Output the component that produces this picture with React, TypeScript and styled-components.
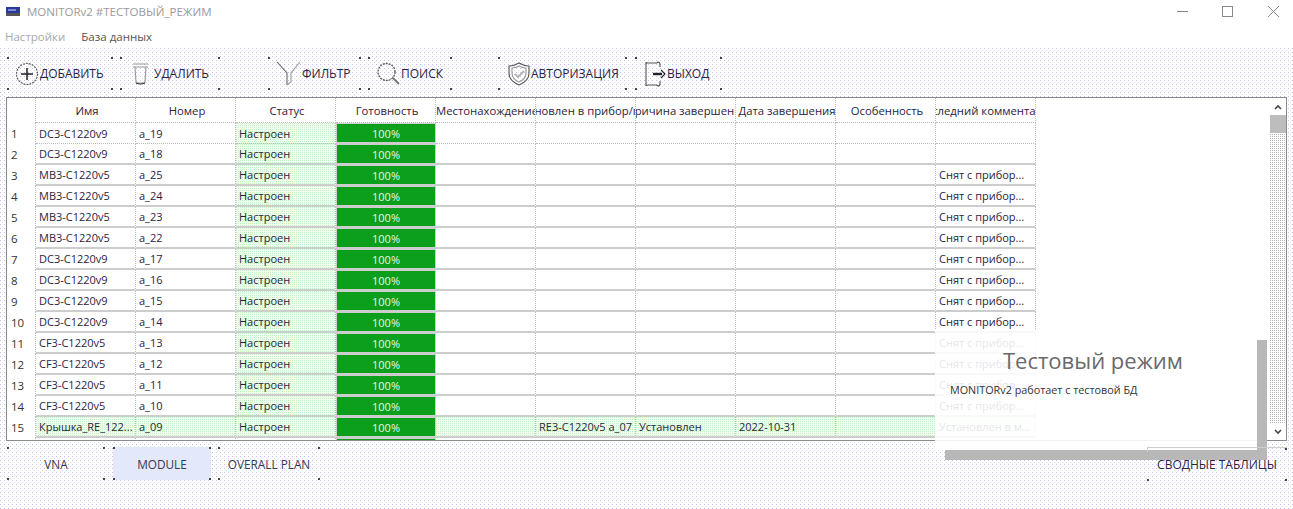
import React from 'react';
import styled, { createGlobalStyle, css } from 'styled-components';

const GlobalStyle = createGlobalStyle`
  html, body {
    margin: 0;
    padding: 0;
    background: #fff;
  }
  body {
    font-family: "Open Sans", "Liberation Sans", sans-serif;
    overflow: hidden;
  }
`;

const dots = css`
  background-color: #fff;
  background-image:
    radial-gradient(circle at 0.5px 0.5px, #c9bdf0 0.75px, transparent 0.75px),
    radial-gradient(circle at 2.5px 2.5px, #d4e2f4 0.75px, transparent 0.75px);
  background-size: 4px 4px;
`;

const corners = css`
  background-image:
    linear-gradient(#444, #444),
    linear-gradient(#444, #444),
    linear-gradient(#444, #444),
    linear-gradient(#444, #444);
  background-size: 2px 2px;
  background-repeat: no-repeat;
  background-position: 0 0, 100% 0, 0 100%, 100% 100%;
`;

const gridLine = '#bcbcbc';

const Window = styled.div`
  position: relative;
  width: 1293px;
  height: 509px;
  overflow: hidden;
  display: flex;
  flex-direction: column;
`;

const TitleBar = styled.div`
  height: 23px;
  display: flex;
  align-items: center;
  padding-left: 6px;
  font-size: 11.5px;
  color: #9a9a9a;
  gap: 7px;
`;

const WindowButtons = styled.div`
  margin-left: auto;
  margin-right: -3px;
  display: flex;
`;

const WindowButton = styled.div`
  width: 45.5px;
  height: 23px;
  display: flex;
  align-items: center;
  justify-content: center;
`;

const MenuBar = styled.div`
  height: 25px;
  box-sizing: border-box;
  padding: 2px 0 0 5px;
  display: flex;
  align-items: center;
  gap: 16px;
  font-size: 11.5px;
`;

const MenuItem = styled.span<{ $disabled?: boolean }>`
  color: ${({ $disabled }) => ($disabled ? '#a8a8a8' : '#555')};
`;

const Body = styled.div`
  ${dots}
  flex: 1;
  display: flex;
  flex-direction: column;
`;

const Toolbar = styled.div`
  height: 49px;
  box-sizing: border-box;
  display: flex;
  align-items: flex-start;
  padding: 9px 0 0 7px;
`;

const ToolButton = styled.div<{ $width: number; $gap: number; $inset: number }>`
  ${corners}
  width: ${({ $width }) => $width}px;
  margin-left: ${({ $gap }) => $gap}px;
  height: 33px;
  display: flex;
  align-items: center;
  gap: 1px;
  padding-left: ${({ $inset }) => $inset}px;
  box-sizing: border-box;
  font-size: 12px;
  color: #2a2440;
  white-space: nowrap;
  flex: none;
`;

const TableFrame = styled.div`
  margin-left: 6px;
  width: 1281px;
  height: 344px;
  box-sizing: border-box;
  border: 1px solid #8a8a8a;
  background: #fff;
  display: flex;
  overflow: hidden;
`;

const TableArea = styled.div`
  flex: 1;
  overflow: hidden;
  font-size: 11px;
  color: #2a2440;
`;

const HeaderRow = styled.div`
  display: grid;
  grid-template-columns: 29px repeat(10, 100px);
  height: 25px;
`;

const HeadCell = styled.div`
  box-sizing: border-box;
  display: flex;
  align-items: center;
  justify-content: center;
  padding-left: 3px;
  white-space: nowrap;
  overflow: hidden;
  border-right: 1px dotted ${gridLine};
  border-bottom: 1px dotted ${gridLine};
  font-size: 11.3px;
`;

const HeadLabel = styled.span`
  flex: none;
`;

const Corner = styled.div`
  border-right: 1px dotted ${gridLine};
`;

const Row = styled.div`
  display: grid;
  grid-template-columns: 29px repeat(10, 100px);
  height: 21px;
`;

const RowHead = styled.div`
  display: flex;
  align-items: center;
  padding-left: 4px;
  font-size: 11.5px;
  color: #333;
  border-right: 1px dotted ${gridLine};
`;

const Cell = styled.div<{ $green?: boolean; $thick?: boolean }>`
  box-sizing: border-box;
  display: flex;
  align-items: center;
  padding-left: 3px;
  white-space: nowrap;
  overflow: hidden;
  border-right: 1px dotted ${gridLine};
  border-bottom: ${({ $thick }) => ($thick ? '2px solid #cdcdcd' : `1px dotted ${gridLine}`)};
  ${({ $green }) =>
    $green &&
    css`
      background-color: #f0fdf0;
      background-image: radial-gradient(circle at 0.5px 0.5px, #c6f2c6 0.75px, transparent 0.75px);
      background-size: 2px 2px;
    `}
`;

const ReadyCell = styled.div`
  box-sizing: border-box;
  display: flex;
  align-items: center;
  justify-content: center;
  background: #0b9f1c;
  background-clip: padding-box;
  color: #e8f6e8;
  border-style: solid;
  border-color: #cdcdcd;
  border-width: 1px 1px 2px 1px;
`;

const Scrollbar = styled.div`
  width: 16px;
  flex: none;
  display: flex;
  flex-direction: column;
  background-color: #fff;
  background-image: radial-gradient(circle at 0.5px 0.5px, #b4b4b4 0.75px, transparent 0.75px);
  background-size: 2px 2px;
`;

const ScrollArrow = styled.div`
  height: 17px;
  flex: none;
  background: #fff;
  display: flex;
  align-items: center;
  justify-content: center;
`;

const ScrollThumb = styled.div`
  height: 18px;
  background: #bdbdbd;
  flex: none;
`;

const ScrollFill = styled.div`
  flex: 1;
`;

const Footer = styled.div`
  flex: 1;
  display: flex;
  align-items: flex-start;
  padding-top: 6px;
  padding-left: 7px;
`;

const TabButton = styled.div<{ $width: number; $gap: number; $active?: boolean }>`
  ${corners}
  width: ${({ $width }) => $width}px;
  margin-left: ${({ $gap }) => $gap}px;
  height: 33px;
  display: flex;
  align-items: center;
  justify-content: center;
  font-size: 11.8px;
  color: #3a3650;
  background-color: ${({ $active }) => ($active ? '#e3e8fb' : 'transparent')};
`;

const SummaryButton = styled.div`
  ${corners}
  background-position: 0 100%, 100% 0, 0 100%, 100% 100%;
  position: relative;
  z-index: 2;
  margin-left: auto;
  margin-right: 6px;
  width: 140px;
  height: 34px;
  box-sizing: border-box;
  border-top: 1px solid #cfcfcf;
  display: flex;
  align-items: center;
  justify-content: center;
  font-size: 12px;
  color: #2a2440;
  white-space: nowrap;

  &::before {
    content: '';
    position: absolute;
    left: 0;
    top: 0;
    width: 1px;
    height: 4px;
    background: #cfcfcf;
  }
`;

const Toast = styled.div`
  position: absolute;
  left: 935px;
  top: 330px;
  width: 322px;
  height: 120px;
  background: rgba(255, 255, 255, 0.88);
  box-shadow: 10px 10px 0 #b8b8b8;
`;

const ToastTitle = styled.div`
  margin: 16px 0 0 68px;
  font-size: 22px;
  line-height: 28px;
  color: #6a6a6a;
  white-space: nowrap;
`;

const ToastText = styled.div`
  margin: 8px 0 0 15px;
  font-size: 10.8px;
  line-height: 16px;
  color: #333;
  white-space: nowrap;
`;

const Icon = styled.svg`
  flex: none;
  fill: none;
  stroke: #555;
  stroke-width: 1.1;
`;

const PlusIcon = () => (
  <Icon width="24" height="24" viewBox="0 0 24 24">
    <circle cx="12" cy="12" r="10.5" strokeDasharray="2 1" />
    <path d="M12 6v12M6 12h12" stroke="#222" strokeWidth="1.5" />
  </Icon>
);

const TrashIcon = () => (
  <Icon width="20" height="24" viewBox="0 0 20 24">
    <path d="M0 2h15M0 5h15" stroke="#999" />
    <path d="M2 5l1 15q0 1 1 1h7q1 0 1-1l1-15" stroke="#999" />
    <path d="M3 21q4 2 9 0" stroke="#333" />
  </Icon>
);

const FunnelIcon = () => (
  <Icon width="25" height="26" viewBox="0 0 25 26">
    <path d="M1 1l10 11v12" stroke="#666" />
    <path d="M24 1l-9 11v9l-4 3" stroke="#999" />
  </Icon>
);

const SearchIcon = () => (
  <Icon width="23" height="24" viewBox="0 0 23 24">
    <circle cx="9.5" cy="10" r="8.5" strokeWidth="1.3" strokeDasharray="2 1" />
    <path d="M16 16l6 6" stroke="#777" strokeWidth="2" />
  </Icon>
);

const ShieldIcon = () => (
  <Icon width="22" height="24" viewBox="0 0 22 24">
    <path d="M11 1q5 3 10 3v7q0 8-10 12Q1 19 1 11V4q5 0 10-3z" />
    <path d="M11 4q3 2 7 2v5q0 6-7 9-7-3-7-9V6q4 0 7-2z" stroke="#999" />
    <path d="M7 12l3 3 6-6" stroke="#aaa" strokeWidth="1.6" />
  </Icon>
);

const ExitIcon = () => (
  <Icon width="21" height="26" viewBox="0 0 21 26">
    <path d="M15 6V3q0-2-2-2l-1 1H3q-2 0-2-1v24q0-1 2-1h9l1 1q2 0 2-2v-3" />
    <path d="M8 13h9" stroke="#222" strokeWidth="2.4" />
    <path d="M16 9l4 4-4 4" stroke="#222" />
  </Icon>
);

const AppIcon = () => (
  <svg width="14" height="9" viewBox="0 0 14 9">
    <rect x="0" y="0" width="14" height="6" fill="#2b3a9a" />
    <rect x="2" y="2" width="8" height="2" fill="#7d8ad8" />
    <rect x="0" y="6" width="14" height="3" fill="#555" />
  </svg>
);

const columns = [
  'Имя',
  'Номер',
  'Статус',
  'Готовность',
  'Местонахождение',
  'Установлен в прибор/плату',
  'Причина завершения',
  'Дата завершения',
  'Особенность',
  'Последний комментарий',
];

type RowData = { name: string; num: string; comment?: string };

const rows: RowData[] = [
  { name: 'DC3-C1220v9', num: 'a_19' },
  { name: 'DC3-C1220v9', num: 'a_18' },
  { name: 'MB3-C1220v5', num: 'a_25', comment: 'Снят с прибор...' },
  { name: 'MB3-C1220v5', num: 'a_24', comment: 'Снят с прибор...' },
  { name: 'MB3-C1220v5', num: 'a_23', comment: 'Снят с прибор...' },
  { name: 'MB3-C1220v5', num: 'a_22', comment: 'Снят с прибор...' },
  { name: 'DC3-C1220v9', num: 'a_17', comment: 'Снят с прибор...' },
  { name: 'DC3-C1220v9', num: 'a_16', comment: 'Снят с прибор...' },
  { name: 'DC3-C1220v9', num: 'a_15', comment: 'Снят с прибор...' },
  { name: 'DC3-C1220v9', num: 'a_14', comment: 'Снят с прибор...' },
  { name: 'CF3-C1220v5', num: 'a_13', comment: 'Снят с прибор...' },
  { name: 'CF3-C1220v5', num: 'a_12', comment: 'Снят с прибор...' },
  { name: 'CF3-C1220v5', num: 'a_11', comment: 'Снят с прибор...' },
  { name: 'CF3-C1220v5', num: 'a_10', comment: 'Снят с прибор...' },
];

const blanks = [0, 1, 2, 3, 4];

export default function App() {
  return (
    <Window>
      <GlobalStyle />
      <TitleBar>
        <AppIcon />
        MONITORv2 #ТЕСТОВЫЙ_РЕЖИМ
        <WindowButtons>
          <WindowButton>
            <svg width="11" height="11" viewBox="0 0 11 11"><path d="M0 5.5h11" stroke="#888" /></svg>
          </WindowButton>
          <WindowButton>
            <svg width="11" height="11" viewBox="0 0 11 11"><rect x=".5" y=".5" width="10" height="10" fill="none" stroke="#888" /></svg>
          </WindowButton>
          <WindowButton>
            <svg width="11" height="11" viewBox="0 0 11 11"><path d="M0 0l11 11M11 0L0 11" stroke="#888" /></svg>
          </WindowButton>
        </WindowButtons>
      </TitleBar>
      <MenuBar>
        <MenuItem $disabled>Настройки</MenuItem>
        <MenuItem>База данных</MenuItem>
      </MenuBar>
      <Body>
        <Toolbar>
          <ToolButton $width={106} $gap={0} $inset={8}><PlusIcon />ДОБАВИТЬ</ToolButton>
          <ToolButton $width={100} $gap={7} $inset={13}><TrashIcon />УДАЛИТЬ</ToolButton>
          <ToolButton $width={93} $gap={48} $inset={8}><FunnelIcon />ФИЛЬТР</ToolButton>
          <ToolButton $width={84} $gap={7} $inset={9}><SearchIcon />ПОИСК</ToolButton>
          <ToolButton $width={129} $gap={46} $inset={10}><ShieldIcon />АВТОРИЗАЦИЯ</ToolButton>
          <ToolButton $width={87} $gap={8} $inset={10}><ExitIcon />ВЫХОД</ToolButton>
        </Toolbar>
        <TableFrame>
          <TableArea>
            <HeaderRow>
              <Corner />
              {columns.map((c) => (
                <HeadCell key={c}><HeadLabel>{c}</HeadLabel></HeadCell>
              ))}
            </HeaderRow>
            {rows.map((r, i) => (
              <Row key={i}>
                <RowHead>{i + 1}</RowHead>
                <Cell $thick={i > 0}>{r.name}</Cell>
                <Cell $thick={i > 0}>{r.num}</Cell>
                <Cell $green $thick={i > 0}>Настроен</Cell>
                <ReadyCell>100%</ReadyCell>
                {blanks.map((b) => (
                  <Cell key={b} $thick={i > 0} />
                ))}
                <Cell $thick={i > 0}>{r.comment}</Cell>
              </Row>
            ))}
            <Row>
              <RowHead>15</RowHead>
              <Cell $green $thick>Крышка_RE_122...</Cell>
              <Cell $green $thick>a_09</Cell>
              <Cell $green $thick>Настроен</Cell>
              <ReadyCell>100%</ReadyCell>
              <Cell $green $thick />
              <Cell $green $thick>RE3-C1220v5 a_07</Cell>
              <Cell $green $thick>Установлен</Cell>
              <Cell $green $thick>2022-10-31</Cell>
              <Cell $green $thick />
              <Cell $green $thick>Установлен в м...</Cell>
            </Row>
            <Row>
              <RowHead />
              <Cell /><Cell /><Cell />
              <ReadyCell />
            </Row>
          </TableArea>
          <Scrollbar>
            <ScrollArrow>
              <svg width="8" height="6" viewBox="0 0 8 6"><path d="M1 5l3-3 3 3" fill="none" stroke="#444" strokeWidth="1.6" /></svg>
            </ScrollArrow>
            <ScrollThumb />
            <ScrollFill />
            <ScrollArrow>
              <svg width="8" height="6" viewBox="0 0 8 6"><path d="M1 1l3 3 3-3" fill="none" stroke="#444" strokeWidth="1.6" /></svg>
            </ScrollArrow>
          </Scrollbar>
        </TableFrame>
        <Footer>
          <TabButton $width={98} $gap={0}>VNA</TabButton>
          <TabButton $width={98} $gap={8} $active>MODULE</TabButton>
          <TabButton $width={102} $gap={7}>OVERALL PLAN</TabButton>
          <SummaryButton>СВОДНЫЕ ТАБЛИЦЫ</SummaryButton>
        </Footer>
      </Body>
      <Toast>
        <ToastTitle>Тестовый режим</ToastTitle>
        <ToastText>MONITORv2 работает с тестовой БД</ToastText>
      </Toast>
    </Window>
  );
}
